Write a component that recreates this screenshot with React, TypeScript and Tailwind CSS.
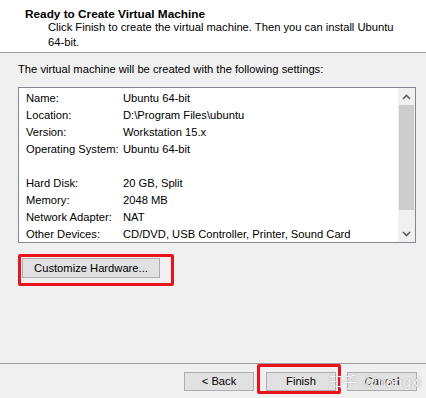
const rows: [string, string][] = [
  ['Name:', 'Ubuntu 64-bit'],
  ['Location:', 'D:\\Program Files\\ubuntu'],
  ['Version:', 'Workstation 15.x'],
  ['Operating System:', 'Ubuntu 64-bit'],
  ['', ''],
  ['Hard Disk:', '20 GB, Split'],
  ['Memory:', '2048 MB'],
  ['Network Adapter:', 'NAT'],
  ['Other Devices:', 'CD/DVD, USB Controller, Printer, Sound Card'],
]

function Chevron({ up }: { up?: boolean }) {
  return (
    <svg width="9" height="6" viewBox="0 0 9 6" className="block">
      <path
        d={up ? 'M1 5 L4.5 1.5 L8 5' : 'M1 1 L4.5 4.5 L8 1'}
        fill="none"
        stroke="#606060"
        strokeWidth="1.6"
      />
    </svg>
  )
}

function WinButton({ label, className = '' }: { label: string; className?: string }) {
  return (
    <button
      type="button"
      className={`h-[19px] bg-[#e1e1e1] border border-[#adadad] text-[11.2px] leading-[17px] text-black ${className}`}
    >
      {label}
    </button>
  )
}

export default function App() {
  return (
    <div className="relative w-[426px] h-[398px] bg-[#f0f0f0] flex flex-col overflow-hidden text-[11.2px] text-black font-['Liberation_Sans',sans-serif]">
      {/* header */}
      <div className="h-[53px] bg-white border-b border-[#a0a0a0] pl-[25px] pt-[7px]">
        <div className="font-bold text-[11.8px] leading-[14px]">Ready to Create Virtual Machine</div>
        <div className="pl-[23px] mt-[-1px] leading-[15px]">
          Click Finish to create the virtual machine. Then you can install Ubuntu
          <br />
          64-bit.
        </div>
      </div>

      <div className="px-[18px] pt-[8px]">
        <div className="leading-[16px]">The virtual machine will be created with the following settings:</div>

        <div className="mt-[10px] w-[398px] h-[156px] bg-white border border-[#828790] flex">
          <div className="flex-1 pt-[2px] pl-[7px]">
            {rows.map(([k, v], i) => (
              <div key={i} className="flex h-[17px] leading-[17px] whitespace-nowrap">
                <span className="w-[97px] shrink-0">{k}</span>
                <span>{v}</span>
              </div>
            ))}
          </div>
          <div className="w-[17px] bg-[#f0f0f0] flex flex-col">
            <div className="h-[17px] flex items-center justify-center">
              <Chevron up />
            </div>
            <div className="h-[105px] mx-[1px] bg-[#cdcdcd]" />
            <div className="flex-1" />
            <div className="h-[17px] flex items-center justify-center">
              <Chevron />
            </div>
          </div>
        </div>

        <div className="mt-[11px] inline-block border-[3px] border-[#e8131b] rounded-[2px] pl-[1px] pt-[1px] pr-[11px] pb-[5px]">
          <WinButton label="Customize Hardware..." className="w-[138px] h-[20px] leading-[18px]" />
        </div>
      </div>

      {/* footer */}
      <div className="mt-auto h-[35px] border-t border-[#a0a0a0] flex justify-end items-start pt-[8px] pr-[9px]">
        <WinButton label="< Back" className="w-[70px]" />
        <div className="relative ml-[12px]">
          <WinButton label="Finish" className="w-[70px]" />
          <span className="absolute -left-[9px] -top-[8px] -right-[5px] -bottom-[3px] border-[3px] border-[#e8131b] rounded-[2px]" />
        </div>
        <WinButton label="Cancel" className="w-[70px] ml-[11px]" />
      </div>

      {/* watermark */}
      <div className="absolute left-[328px] top-[373px] text-[15px] leading-[18px] text-white/90 whitespace-nowrap [text-shadow:0_0_1px_#888] font-['Liberation_Sans','Noto_Sans_CJK_SC',sans-serif]">
        知乎 @nongxi
      </div>
    </div>
  )
}
